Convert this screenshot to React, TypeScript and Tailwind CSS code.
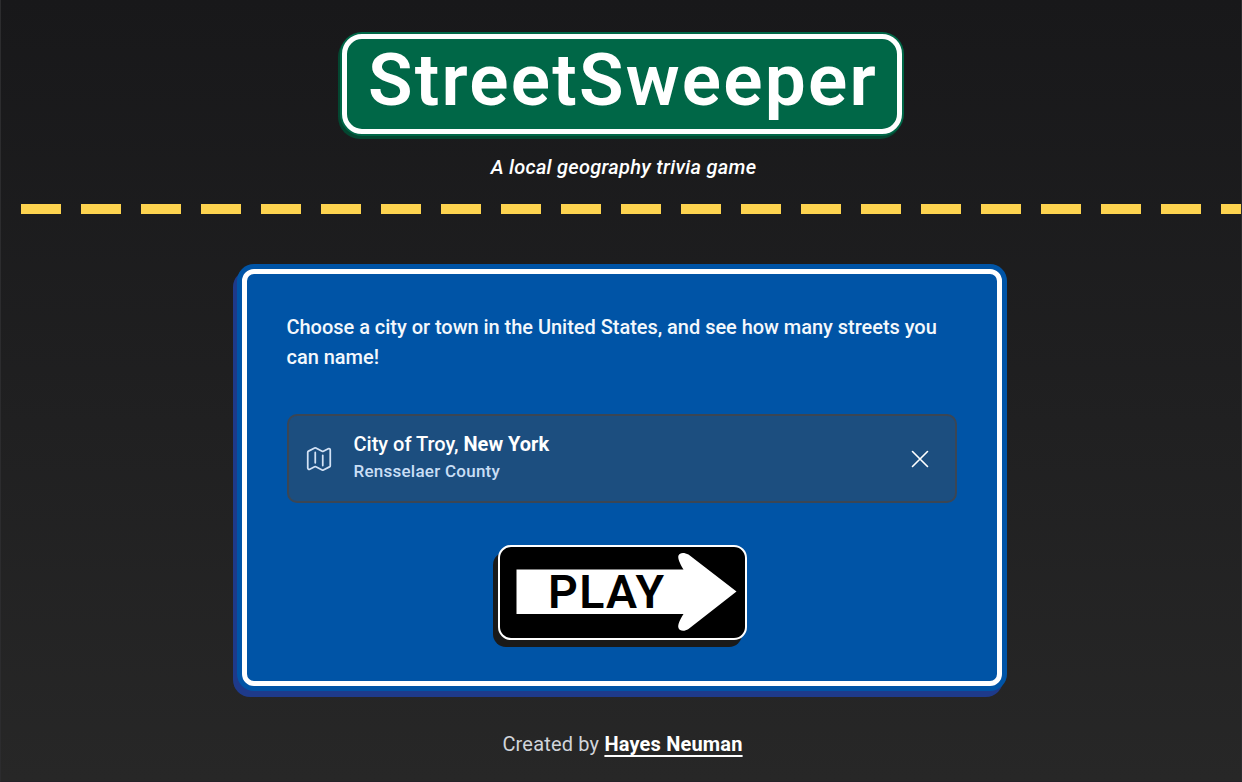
import React from "react";

function MapIcon() {
  return (
    <svg className="size-[30px] shrink-0 text-[#d3e2f5]" viewBox="0 0 24 24" fill="none" stroke="currentColor" strokeWidth="1.4" strokeLinecap="round" strokeLinejoin="round">
      <path d="M9 6.75V15m6-6v8.25m.503 3.498 4.875-2.437c.381-.19.622-.58.622-1.006V4.82c0-.836-.88-1.38-1.628-1.006l-3.869 1.934c-.317.159-.69.159-1.006 0L9.503 3.252a1.125 1.125 0 0 0-1.006 0L3.622 5.689C3.24 5.88 3 6.27 3 6.695V19.18c0 .836.88 1.38 1.628 1.006l3.869-1.934c.317-.159.69-.159 1.006 0l4.994 2.497c.317.158.69.158 1.006 0Z" />
    </svg>
  );
}

function CloseIcon() {
  return (
    <svg className="size-[30px] text-white" viewBox="0 0 24 24" fill="none" stroke="currentColor" strokeWidth="1.3" strokeLinecap="round" strokeLinejoin="round">
      <path d="M6 18 18 6M6 6l12 12" />
    </svg>
  );
}

function PlayButton() {
  return (
    <button className="relative mt-[42px] ml-[211px] h-[95px] w-[249px] rounded-[13px] border-2 border-white bg-black shadow-[-5px_7px_0_#1a1a1a]">
      <svg className="absolute left-0 top-0" width="245" height="91" viewBox="0 0 245 91" fill="#fff">
        <path d="M16.500 22.500H183.500C179.500 16 177.500 11 178.500 8.500C179.500 5.500 184 5 188.500 7.500L236.500 44.500L188.500 82C184 85 179.500 84 178.500 81C177.500 78 179.500 73.500 183.500 67H16.500Z" />
      </svg>
      <span className="absolute left-[48.5px] top-[15px] text-[46.5px] leading-[60px] font-semibold tracking-[1.3px] text-black">PLAY</span>
    </button>
  );
}

export default function App() {
  return (
    <div className="flex h-[782px] w-full flex-col items-center overflow-hidden border-x border-b border-x-[#2c2c2e] border-b-[#242229] bg-linear-to-b from-[#18181a] to-[#272727] font-['Roboto',sans-serif] text-white">
      <header className="flex w-full flex-col items-center pt-[34px]">
        <h1 className="ml-[1px] flex h-[100px] w-[560px] justify-center rounded-[20px] border-5 border-white bg-[#006747] pl-[3px] text-[73px] leading-[82px] font-semibold tracking-[2.2px] shadow-[0_0_0_2px_#006747,-2px_3px_0_2px_#044630]">StreetSweeper</h1>
        <p className="mt-[18px] ml-[5px] text-[20px] leading-[30px] font-medium tracking-[0.28px] italic">A local geography trivia game</p>
      </header>
      <div className="mt-[22px] h-[10px] w-full shrink-0 bg-[repeating-linear-gradient(90deg,transparent_0_20px,#fdd34f_20px_60px)]" />
      <main className="mt-[55px] ml-[1px] h-[417px] w-[760px] shrink-0 rounded-[12px] border-5 border-white bg-[#0054a6] px-[40px] pt-[38px] shadow-[0_0_0_5px_#0054a6,-4px_6px_0_5px_#1e3a8a]">
        <p className="text-[20px] leading-[30px] font-medium tracking-[-0.03px] whitespace-nowrap text-[#f4f8fc]">
          Choose a city or town in the United States, and see how many streets you<br />can name!
        </p>
        <div className="mt-[42px] flex h-[89px] w-[670px] items-center rounded-[10px] border-2 border-[#3b4654] bg-[#1c4e7f] px-[15px]">
          <MapIcon />
          <div className="mb-[6px] ml-[20px] flex-1">
            <div className="text-[20px] leading-[30px] font-medium">City of Troy, <b className="font-bold">New York</b></div>
            <div className="text-[17px] leading-[24px] font-medium tracking-[0.25px] text-[#c9def5]">Rensselaer County</div>
          </div>
          <button className="mr-[5px]" aria-label="Clear"><CloseIcon /></button>
        </div>
        <PlayButton />
      </main>
      <footer className="mt-[43px] ml-[3px] text-[20px] leading-[30px] tracking-[0.18px] text-[#d1d5db]">
        Created by <a className="font-bold text-white underline decoration-2 underline-offset-4">Hayes Neuman</a>
      </footer>
    </div>
  );
}
